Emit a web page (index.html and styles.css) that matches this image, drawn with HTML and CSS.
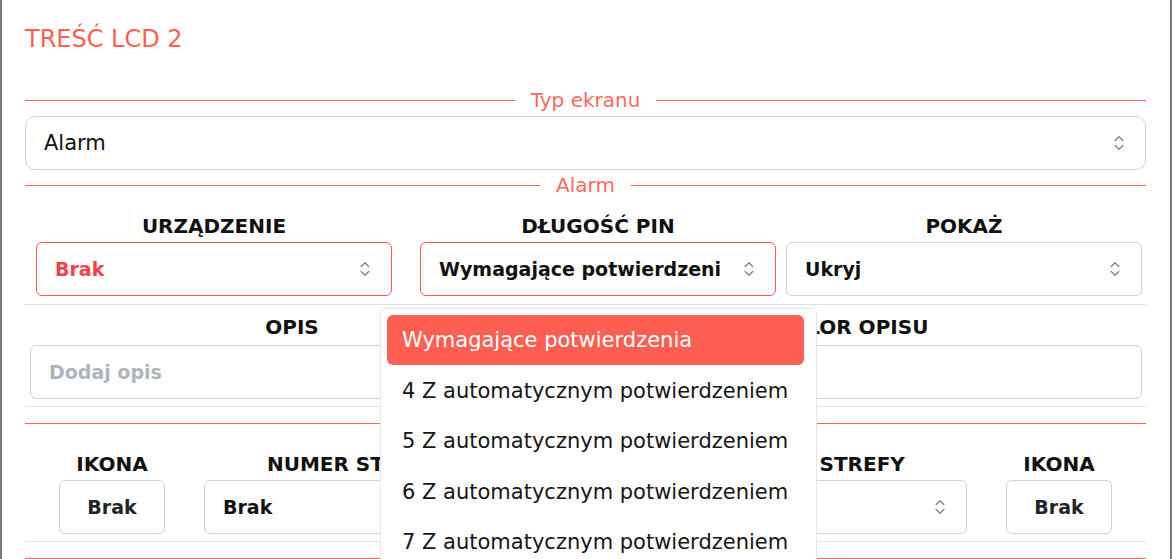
FILE: index.html
```html
<!DOCTYPE html>
<html lang="pl">
<head>
<meta charset="utf-8">
<title>Treść LCD 2</title>
<link rel="stylesheet" href="styles.css">
</head>
<body>
<div class="panel">
  <h2 class="title">TREŚĆ LCD 2</h2>

  <div class="divider divider-first"><span class="line"></span><span class="divider-text">Typ ekranu</span><span class="line"></span></div>

  <div class="select select-wide">
    <span class="select-value regular">Alarm</span>
    <svg class="chev" width="10" height="16" viewBox="0 0 10 16"><path d="M1.2 5.6 L5 1.8 L8.8 5.6 M1.2 10.4 L5 14.2 L8.8 10.4" fill="none" stroke="#7d8690" stroke-width="1.4" stroke-linecap="round" stroke-linejoin="round"/></svg>
  </div>

  <div class="divider divider-second"><span class="line"></span><span class="divider-text">Alarm</span><span class="line"></span></div>

  <div class="row row-main">
    <div class="field">
      <div class="label">URZĄDZENIE</div>
      <div class="select select-error">
        <span class="select-value error-text">Brak</span>
        <svg class="chev" width="10" height="16" viewBox="0 0 10 16"><path d="M1.2 5.6 L5 1.8 L8.8 5.6 M1.2 10.4 L5 14.2 L8.8 10.4" fill="none" stroke="#7d8690" stroke-width="1.4" stroke-linecap="round" stroke-linejoin="round"/></svg>
      </div>
    </div>
    <div class="field field-pin">
      <div class="label">DŁUGOŚĆ PIN</div>
      <div class="select select-error">
        <span class="select-value">Wymagające potwierdzenia</span>
        <svg class="chev" width="10" height="16" viewBox="0 0 10 16"><path d="M1.2 5.6 L5 1.8 L8.8 5.6 M1.2 10.4 L5 14.2 L8.8 10.4" fill="none" stroke="#7d8690" stroke-width="1.4" stroke-linecap="round" stroke-linejoin="round"/></svg>
      </div>
      <ul class="dropdown">
        <li class="option option-active">Wymagające potwierdzenia</li>
        <li class="option">4 Z automatycznym potwierdzeniem</li>
        <li class="option">5 Z automatycznym potwierdzeniem</li>
        <li class="option">6 Z automatycznym potwierdzeniem</li>
        <li class="option">7 Z automatycznym potwierdzeniem</li>
        <li class="option">8 Z automatycznym potwierdzeniem</li>
      </ul>
    </div>
    <div class="field">
      <div class="label">POKAŻ</div>
      <div class="select">
        <span class="select-value">Ukryj</span>
        <svg class="chev" width="10" height="16" viewBox="0 0 10 16"><path d="M1.2 5.6 L5 1.8 L8.8 5.6 M1.2 10.4 L5 14.2 L8.8 10.4" fill="none" stroke="#7d8690" stroke-width="1.4" stroke-linecap="round" stroke-linejoin="round"/></svg>
      </div>
    </div>
  </div>

  <hr class="sep sep-main">

  <div class="row row-desc">
    <div class="field">
      <div class="label">OPIS</div>
      <div class="input"><span class="placeholder">Dodaj opis</span></div>
    </div>
    <div class="field">
      <div class="label">KOLOR OPISU</div>
      <div class="input"></div>
    </div>
  </div>

  <hr class="sep sep-desc">

  <div class="divider-plain"></div>

  <div class="row row-zone">
    <div class="field">
      <div class="label">IKONA</div>
      <div class="box">Brak</div>
    </div>
    <div class="field">
      <div class="label">NUMER STREFY</div>
      <div class="select">
        <span class="select-value">Brak</span>
        <svg class="chev" width="10" height="16" viewBox="0 0 10 16"><path d="M1.2 5.6 L5 1.8 L8.8 5.6 M1.2 10.4 L5 14.2 L8.8 10.4" fill="none" stroke="#7d8690" stroke-width="1.4" stroke-linecap="round" stroke-linejoin="round"/></svg>
      </div>
    </div>
    <div class="field"></div>
    <div class="field">
      <div class="label">NAZWA STREFY</div>
      <div class="select">
        <span class="select-value">Brak</span>
        <svg class="chev" width="10" height="16" viewBox="0 0 10 16"><path d="M1.2 5.6 L5 1.8 L8.8 5.6 M1.2 10.4 L5 14.2 L8.8 10.4" fill="none" stroke="#7d8690" stroke-width="1.4" stroke-linecap="round" stroke-linejoin="round"/></svg>
      </div>
    </div>
    <div class="field">
      <div class="label">IKONA</div>
      <div class="box">Brak</div>
    </div>
  </div>

  <hr class="sep sep-zone">

  <div class="divider-plain"></div>
</div>
</body>
</html>
```

FILE: styles.css
```css
html, body {
  margin: 0;
  padding: 0;
  height: 559px;
  overflow: hidden;
  background: #ffffff;
}

body {
  font-family: "DejaVu Sans", "Liberation Sans", sans-serif;
  color: #111111;
}

.panel {
  box-sizing: border-box;
  width: 1172px;
  min-height: 700px;
  border-left: 2px solid #7a7a7a;
  border-right: 2px solid #7a7a7a;
  padding: 25px 24px 0 23px;
  position: relative;
}

.title {
  margin: 0;
  font-size: 24px;
  line-height: 28px;
  font-weight: normal;
  color: #ff5f52;
  letter-spacing: 0;
}

.divider {
  display: flex;
  align-items: center;
  height: 24px;
}

.divider-first {
  margin-top: 35px;
}

.divider-second {
  margin-top: 3px;
}

.divider .line {
  flex: 1;
  height: 1px;
  background: #f0665a;
}

.divider-text {
  padding: 0 16px;
  font-size: 20px;
  line-height: 24px;
  color: #ff6a5e;
}

.select {
  box-sizing: border-box;
  height: 54px;
  border: 1px solid #ced4da;
  border-radius: 6px;
  display: flex;
  align-items: center;
  padding: 0 21px 0 18px;
  background: #fff;
}

.select-wide {
  margin-top: 4px;
  border-radius: 10px;
}

.select-error {
  border-color: #f55a5a;
}

.select-value {
  flex: 1;
  min-width: 0;
  font-size: 19px;
  font-weight: bold;
  white-space: nowrap;
  overflow: hidden;
  color: #111;
  margin-right: 24px;
}

.select-value.regular {
  font-size: 21px;
  font-weight: normal;
}

.error-text {
  color: #f5424a;
}

.chev {
  flex: none;
  display: block;
}

.row {
  display: grid;
}

.row-main {
  margin-top: 17px;
  grid-template-columns: 356px 374px 356px;
  column-gap: 10px;
  padding-left: 11px;
}

.field {
  display: flex;
  flex-direction: column;
  min-width: 0;
}

.field-pin {
  width: 356px;
  justify-self: end;
  position: relative;
}

.label {
  font-size: 20px;
  line-height: 24px;
  font-weight: bold;
  text-align: center;
  color: #111;
  white-space: nowrap;
  margin-bottom: 4px;
}

.sep {
  margin: 0;
  border: 0;
  height: 1px;
  background: #dee2e6;
}

.sep-main {
  margin-top: 8px;
}

.row-desc {
  margin-top: 10px;
  grid-template-columns: 524px 580px;
  column-gap: 8px;
  padding-left: 5px;
}

.row-desc .label {
  margin-bottom: 6px;
}

.input {
  box-sizing: border-box;
  height: 54px;
  border: 1px solid #ced4da;
  border-radius: 6px;
  display: flex;
  align-items: center;
  padding: 0 18px;
}

.placeholder {
  font-size: 19px;
  font-weight: bold;
  color: #adb5bd;
}

.sep-desc {
  margin-top: 7px;
}

.divider-plain {
  height: 1px;
  background: #f0665a;
  margin-top: 16px;
}

.row-zone {
  margin-top: 28px;
  grid-template-columns: 106px 300px 85px 300px 106px;
  column-gap: 39px;
  padding: 0 34px;
}

.box {
  box-sizing: border-box;
  height: 54px;
  border: 1px solid #ced4da;
  border-radius: 6px;
  display: flex;
  align-items: center;
  justify-content: center;
  font-size: 19px;
  font-weight: bold;
  color: #212529;
}

.sep-zone {
  margin-top: 7px;
}

.dropdown {
  position: absolute;
  left: -40px;
  top: calc(100% + 12px);
  width: 437px;
  box-sizing: border-box;
  margin: 0;
  padding: 6px 12px 6px 6px;
  list-style: none;
  background: #fff;
  border: 1px solid #e4e7eb;
  border-radius: 5px;
  z-index: 10;
}

.option {
  height: 50.5px;
  display: flex;
  align-items: center;
  padding-left: 15px;
  font-size: 21px;
  color: #161616;
  white-space: nowrap;
  border-radius: 6px;
}

.option-active {
  height: 50px;
  margin-bottom: 0.5px;
  background: #ff5f52;
  color: #ffffff;
}
```
